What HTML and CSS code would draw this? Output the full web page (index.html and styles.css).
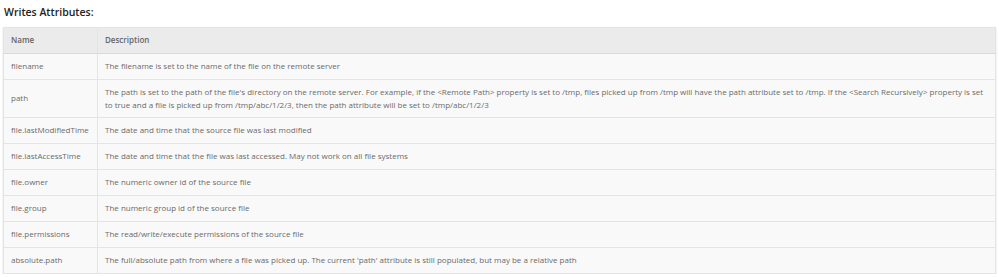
FILE: index.html
```html
<!DOCTYPE html>
<html>
<head>
<meta charset="utf-8">
<link rel="stylesheet" href="styles.css">
</head>
<body>
<h3 class="title">Writes Attributes:</h3>
<table class="attrs">
  <colgroup><col class="c-name"><col></colgroup>
  <thead>
    <tr><th>Name</th><th>Description</th></tr>
  </thead>
  <tbody>
    <tr><td>filename</td><td>The filename is set to the name of the file on the remote server</td></tr>
    <tr><td>path</td><td>The path is set to the path of the file's directory on the remote server. For example, if the &lt;Remote Path&gt; property is set to /tmp, files picked up from /tmp will have the path attribute set to /tmp. If the &lt;Search Recursively&gt; property is set to true and a file is picked up from /tmp/abc/1/2/3, then the path attribute will be set to /tmp/abc/1/2/3</td></tr>
    <tr><td>file.lastModifiedTime</td><td>The date and time that the source file was last modified</td></tr>
    <tr><td>file.lastAccessTime</td><td>The date and time that the file was last accessed. May not work on all file systems</td></tr>
    <tr><td>file.owner</td><td>The numeric owner id of the source file</td></tr>
    <tr><td>file.group</td><td>The numeric group id of the source file</td></tr>
    <tr><td>file.permissions</td><td>The read/write/execute permissions of the source file</td></tr>
    <tr><td>absolute.path</td><td>The full/absolute path from where a file was picked up. The current 'path' attribute is still populated, but may be a relative path</td></tr>
  </tbody>
</table>
</body>
</html>
```
FILE: styles.css
```css
html, body {
  margin: 0;
  padding: 0;
  background: #ffffff;
}
body {
  padding: 0 3px;
  font-family: "Open Sans", "Liberation Sans", sans-serif;
}
.title {
  margin: 0;
  padding: 5px 0 0 1px;
  height: 23px;
  box-sizing: border-box;
  font-size: 10.5px;
  font-weight: 600;
  color: #222;
  line-height: 14px;
}
.attrs {
  width: 993px;
  table-layout: fixed;
  border-collapse: collapse;
  border: 1px solid #dcdcdc;
  box-shadow: 0 1px 2px rgba(0,0,0,0.12);
  font-size: 8px;
  color: #6a6a6a;
  margin-top: 4px;
}
.c-name {
  width: 94px;
}
.attrs th, .attrs td {
  border: 1px solid #e4e4e4;
  text-align: left;
  vertical-align: middle;
  padding: 6px 5px 6px 7px;
  line-height: 12.5px;
  height: 13px;
}
.attrs th {
  background: #ebebeb;
  font-weight: 600;
  color: #666;
  border-bottom: 1px solid #dadada;
}
.attrs td {
  background: #f9f9f9;
}
```
